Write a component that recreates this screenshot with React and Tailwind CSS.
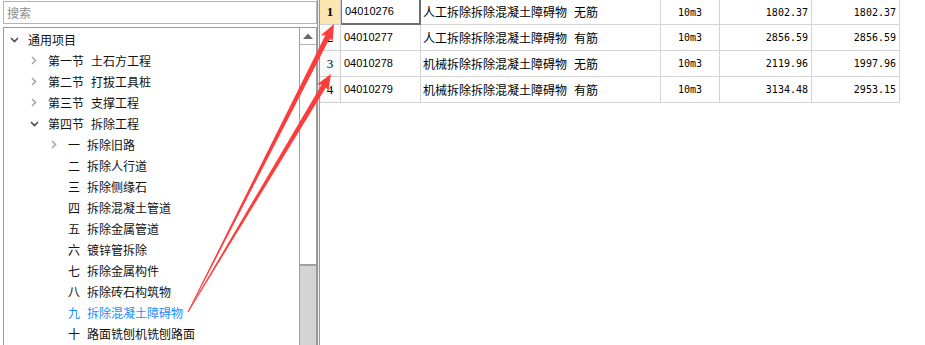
const treeItems = [
  { level: 0, icon: 'down', head: '通用项目' },
  { level: 1, icon: 'right', head: '第一节', text: '土石方工程' },
  { level: 1, icon: 'right', head: '第二节', text: '打拔工具桩' },
  { level: 1, icon: 'right', head: '第三节', text: '支撑工程' },
  { level: 1, icon: 'down', head: '第四节', text: '拆除工程' },
  { level: 2, icon: 'right', head: '一', text: '拆除旧路' },
  { level: 2, head: '二', text: '拆除人行道' },
  { level: 2, head: '三', text: '拆除侧缘石' },
  { level: 2, head: '四', text: '拆除混凝土管道' },
  { level: 2, head: '五', text: '拆除金属管道' },
  { level: 2, head: '六', text: '镀锌管拆除' },
  { level: 2, head: '七', text: '拆除金属构件' },
  { level: 2, head: '八', text: '拆除砖石构筑物' },
  { level: 2, head: '九', text: '拆除混凝土障碍物', active: true },
  { level: 2, head: '十', text: '路面铣刨机铣刨路面' },
];

const rows = [
  { no: '1', code: '04010276', name: '人工拆除拆除混凝土障碍物', tag: '无筋', unit: '10m3', p1: '1802.37', p2: '1802.37' },
  { no: '2', code: '04010277', name: '人工拆除拆除混凝土障碍物', tag: '有筋', unit: '10m3', p1: '2856.59', p2: '2856.59' },
  { no: '3', code: '04010278', name: '机械拆除拆除混凝土障碍物', tag: '无筋', unit: '10m3', p1: '2119.96', p2: '1997.96' },
  { no: '4', code: '04010279', name: '机械拆除拆除混凝土障碍物', tag: '有筋', unit: '10m3', p1: '3134.48', p2: '2953.15' },
];

const levelPad = ['pl-[2px]', 'pl-[22px]', 'pl-[42px]'];

const Chevron = ({ dir }) => {
  if (dir === 'down') {
    return (
      <svg width="9" height="6" viewBox="0 0 9 6">
        <polyline points="1,1 4.5,4.5 8,1" fill="none" stroke="#4a4a4a" strokeWidth="1.6" />
      </svg>
    );
  }
  return (
    <svg width="6" height="9" viewBox="0 0 6 9">
      <polyline points="1,1 4.5,4.5 1,8" fill="none" stroke="#a8a8a8" strokeWidth="1.6" />
    </svg>
  );
};

// tapered red arrow, like the screenshot annotation tool draws
const arrowPoints = (x1, y1, x2, y2) => {
  const len = Math.hypot(x2 - x1, y2 - y1);
  const dx = (x2 - x1) / len;
  const dy = (y2 - y1) / len;
  const nx = -dy;
  const ny = dx;
  const headLen = 14;
  const bx = x2 - dx * headLen;
  const by = y2 - dy * headLen;
  const p = (x, y, w) => `${x + nx * w},${y + ny * w}`;
  return [
    p(x1, y1, 0.4),
    p(bx, by, 2.6),
    p(bx - dx * 2, by - dy * 2, 6.5),
    `${x2},${y2}`,
    p(bx - dx * 2, by - dy * 2, -6.5),
    p(bx, by, -2.6),
    p(x1, y1, -0.4),
  ].join(' ');
};

const TreeRow = ({ item }) => (
  <div className={`h-[21px] flex items-center ${levelPad[item.level]}`}>
    <div className="w-[16px] flex items-center justify-center">
      {item.icon && <Chevron dir={item.icon} />}
    </div>
    <div className={`ml-[6px] flex items-center text-[12px] leading-none ${item.active ? 'text-[#1a8cff]' : 'text-[#111]'}`}>
      <span>{item.head}</span>
      {item.text && <span className="ml-[7px]">{item.text}</span>}
    </div>
  </div>
);

const App = () => {
  return (
    <div
      className="relative w-[925px] h-[345px] overflow-hidden bg-white flex"
      style={{ fontFamily: '"Noto Sans CJK SC", "Noto Sans", sans-serif' }}
    >
      {/* left: search + tree */}
      <div className="w-[317px] h-full flex flex-col pl-[3px] pt-[1px]">
        <div className="h-[23px] border border-[#b4b4b4] flex items-center px-[3px] text-[12px] text-[#8c8c8c]">
          搜索
        </div>
        <div className="mt-[3px] flex-1 border border-b-0 border-[#9a9a9a] flex min-h-0">
          <div className="flex-1 pt-[1px]">
            {treeItems.map((item, i) => (
              <TreeRow key={i} item={item} />
            ))}
          </div>
          <div className="w-[17px] border-l border-[#a0a0a0] flex flex-col">
            <div className="h-[17px] border-b border-[#b4b4b4] flex items-center justify-center">
              <svg width="10" height="6" viewBox="0 0 10 6">
                <polygon points="0,6 5,0.5 10,6" fill="#6a6a6a" />
              </svg>
            </div>
            <div className="h-[221px] bg-white border-b-2 border-[#a0a0a0]" />
            <div className="flex-1 bg-[#d4d4d4]" />
          </div>
        </div>
      </div>

      {/* splitter */}
      <div className="w-[3px] h-full border-l border-r border-[#9a9a9a] bg-[#ececec]" />

      {/* right: table */}
      <div className="flex-1">
        {rows.map((r, i) => (
          <div
            key={r.no}
            className={`grid grid-cols-[21px_80px_240px_59px_92px_88px] ${i === 0 ? 'h-[25px]' : 'h-[26px]'}`}
          >
            <div
              className={`border-r border-b border-[#d0d0d0] flex items-center justify-center text-[13px] ${i === 0 ? 'bg-[#fde5b0] font-bold' : 'bg-[#fafafa]'}`}
              style={{ fontFamily: '"Liberation Serif", serif' }}
            >
              {r.no}
            </div>
            <div
              className={`flex items-center pl-[3px] text-[11px] ${i === 0 ? 'border-l border-l-[#1e90ff] border-r-2 border-b-2 border-[#6e6e6e]' : 'border-r border-b border-[#d4d4d4]'}`}
              style={{ fontFamily: '"Liberation Sans", Arial, sans-serif' }}
            >
              {r.code}
            </div>
            <div className="border-r border-b border-[#d4d4d4] flex items-center pl-[2px] text-[12px] text-black">
              <span>{r.name}</span>
              <span className="ml-[7px]">{r.tag}</span>
            </div>
            <div
              className="border-r border-b border-[#d4d4d4] flex items-center justify-center text-[10px]"
              style={{ fontFamily: '"DejaVu Sans Mono", monospace' }}
            >
              {r.unit}
            </div>
            <div
              className="border-r border-b border-[#d4d4d4] flex items-center justify-end pr-[3px] text-[10px]"
              style={{ fontFamily: '"DejaVu Sans Mono", monospace' }}
            >
              {r.p1}
            </div>
            <div
              className="border-r border-b border-[#d4d4d4] flex items-center justify-end pr-[3px] text-[10px]"
              style={{ fontFamily: '"DejaVu Sans Mono", monospace' }}
            >
              {r.p2}
            </div>
          </div>
        ))}
      </div>

      {/* annotation arrows */}
      <svg className="absolute inset-0 pointer-events-none" width="925" height="345" viewBox="0 0 925 345">
        <polygon points={arrowPoints(188, 312, 334, 24)} fill="#ff3c3c" />
        <polygon points={arrowPoints(188, 312, 331, 74)} fill="#ff3c3c" />
      </svg>
    </div>
  );
};

export default App;
